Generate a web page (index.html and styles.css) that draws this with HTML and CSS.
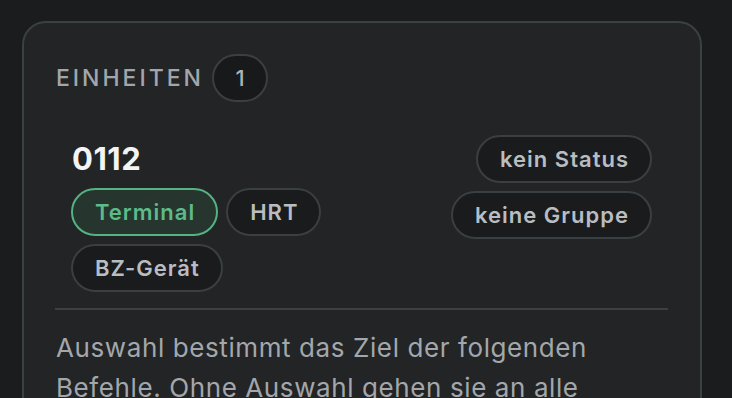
FILE: index.html
```html
<!DOCTYPE html>
<html lang="de">
<head>
<meta charset="utf-8">
<link rel="stylesheet" href="styles.css">
</head>
<body>
<section class="card">
  <header class="card-head">
    <h2 class="title">Einheiten</h2>
    <span class="count">1</span>
  </header>
  <div class="unit">
    <div class="unit-main">
      <div class="unit-id">0112</div>
      <div class="tags">
        <span class="chip chip-active">Terminal</span>
        <span class="chip">HRT</span>
        <span class="chip">BZ-Gerät</span>
      </div>
    </div>
    <div class="unit-side">
      <span class="chip">kein Status</span>
      <span class="chip">keine Gruppe</span>
    </div>
  </div>
  <p class="hint">Auswahl bestimmt das Ziel der folgenden Befehle. Ohne Auswahl gehen sie an alle Einheiten.</p>
</section>
</body>
</html>
```
FILE: styles.css
```css
* { box-sizing: border-box; }
html, body { height: 100%; }
body {
  margin: 0;
  padding: 21px 30px 0 22px;
  background: #1b1c1e;
  font-family: Inter, "Noto Sans", sans-serif;
  overflow: hidden;
}
.card {
  background: #222426;
  border: 2px solid #3a4144;
  border-radius: 24px;
  padding: 31px 32px 32px;
  min-height: 600px;
}
.card-head {
  display: flex;
  align-items: center;
  gap: 8px;
  height: 48px;
}
.title {
  margin: 0;
  font-size: 23px;
  font-weight: 500;
  letter-spacing: 0.13em;
  text-transform: uppercase;
  color: #a2a6aa;
}
.count {
  display: inline-flex;
  align-items: center;
  justify-content: center;
  height: 48px;
  min-width: 56px;
  padding: 0 20px;
  border: 2px solid #393f42;
  border-radius: 24px;
  background: #18191b;
  color: #aeb2b6;
  font-size: 22px;
  font-weight: 500;
}
.unit {
  display: flex;
  justify-content: space-between;
  align-items: flex-start;
  margin-top: 17px;
  padding: 16px;
  border-bottom: 2px solid #3a4144;
  margin-left: -1px;
}
.unit-main { display: flex; flex-direction: column; }
.unit-id {
  font-size: 31px;
  font-weight: 700;
  letter-spacing: 0.5px;
  color: #f3f4f5;
  line-height: 48px;
  margin-top: 0;
  margin-bottom: 5px;
  padding-left: 1px;
}
.tags {
  display: flex;
  flex-wrap: wrap;
  gap: 8px;
  max-width: 270px;
}
.unit-side {
  display: flex;
  flex-direction: column;
  align-items: flex-end;
  gap: 8px;
}
.chip {
  display: inline-flex;
  align-items: center;
  height: 48px;
  padding: 0 21px 0 22px;
  border: 2px solid #393f42;
  border-radius: 24px;
  background: #1a1b1d;
  color: #b9bdc1;
  font-size: 22px;
  font-weight: 600;
  letter-spacing: 1px;
  white-space: nowrap;
}
.chip-active {
  border-color: #55b283;
  background: #27352f;
  color: #5dba89;
}
.hint {
  margin: 18px 0 0;
  font-size: 26px;
  line-height: 40px;
  letter-spacing: 0.6px;
  color: #a3a7ab;
  max-width: 600px;
}
```
